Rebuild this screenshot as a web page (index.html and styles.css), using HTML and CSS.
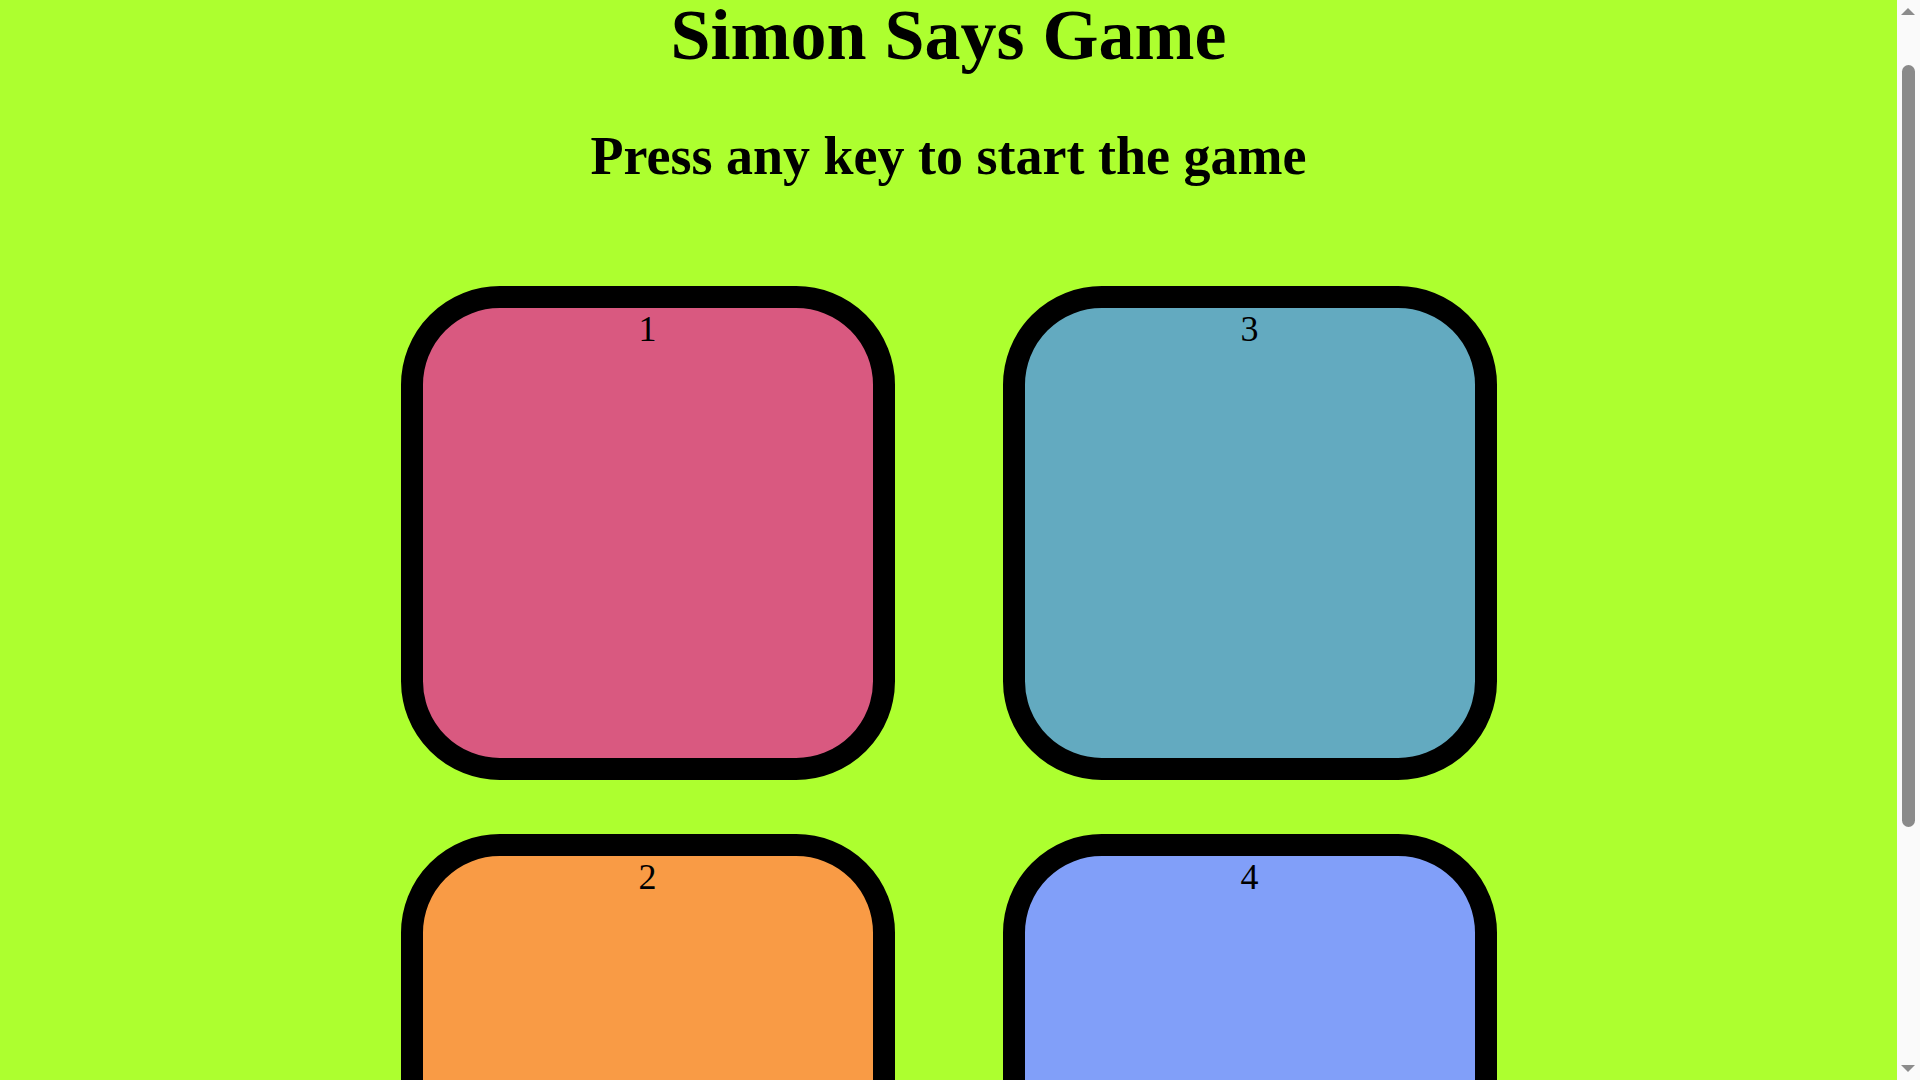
FILE: index.html
```html
<!DOCTYPE html>
<html lang="en">
<head>
<meta charset="UTF-8">
<title>Simon Says Game</title>
<link rel="stylesheet" href="styles.css">
</head>
<body>
<h1>Simon Says Game</h1>
<h2>Press any key to start the game</h2>
<div class="btn-container">
  <div class="line-one">
    <div class="btn red" id="red">1</div>
    <div class="btn yellow" id="yellow">2</div>
  </div>
  <div class="line-two">
    <div class="btn green" id="green">3</div>
    <div class="btn purple" id="purple">4</div>
  </div>
</div>
<div class="scrollbar" aria-hidden="true">
  <span class="sb-arrow sb-up"></span>
  <span class="sb-thumb"></span>
  <span class="sb-arrow sb-down"></span>
</div>
<script src="script.js"></script>
</body>
</html>
```
FILE: styles.css
```css
html {
  scroll-behavior: auto;
}
body {
  margin: 8px 31px 8px 8px;
  background-color: #adff2f;
  color: #000;
  font-family: "Liberation Serif", "Times New Roman", serif;
  font-size: 36px;
  text-align: center;
}
h1 {
  font-size: 2em;
  margin: 0.67em 0;
}
h2 {
  font-size: 1.5em;
  margin: 0.83em 0;
}
.btn-container {
  display: flex;
  justify-content: center;
}
.btn {
  height: 450px;
  width: 450px;
  border-radius: 20%;
  border: 22.5px solid #000;
  margin: 54px;
}
.red { background-color: #d95980; }
.green { background-color: #63aac0; }
.yellow { background-color: #f99b45; }
.purple { background-color: #819ff9; }

/* decorative browser scrollbar overlay */
.scrollbar {
  position: fixed;
  top: 0;
  right: 0;
  width: 23px;
  height: 100vh;
  background: #fafafa;
}
.sb-arrow {
  position: absolute;
  left: 4px;
  width: 0;
  height: 0;
  border-left: 7px solid transparent;
  border-right: 7px solid transparent;
}
.sb-up {
  top: 8px;
  border-bottom: 7px solid #8c8c8c;
}
.sb-down {
  bottom: 8px;
  border-top: 7px solid #8c8c8c;
}
.sb-thumb {
  position: absolute;
  top: 65px;
  left: 5px;
  width: 13px;
  height: 762px;
  border-radius: 7px;
  background: #8a8a8a;
}
```
FILE: script.js
```js
window.scrollTo(0, 54);
window.addEventListener('load', function () { window.scrollTo(0, 54); });
```
